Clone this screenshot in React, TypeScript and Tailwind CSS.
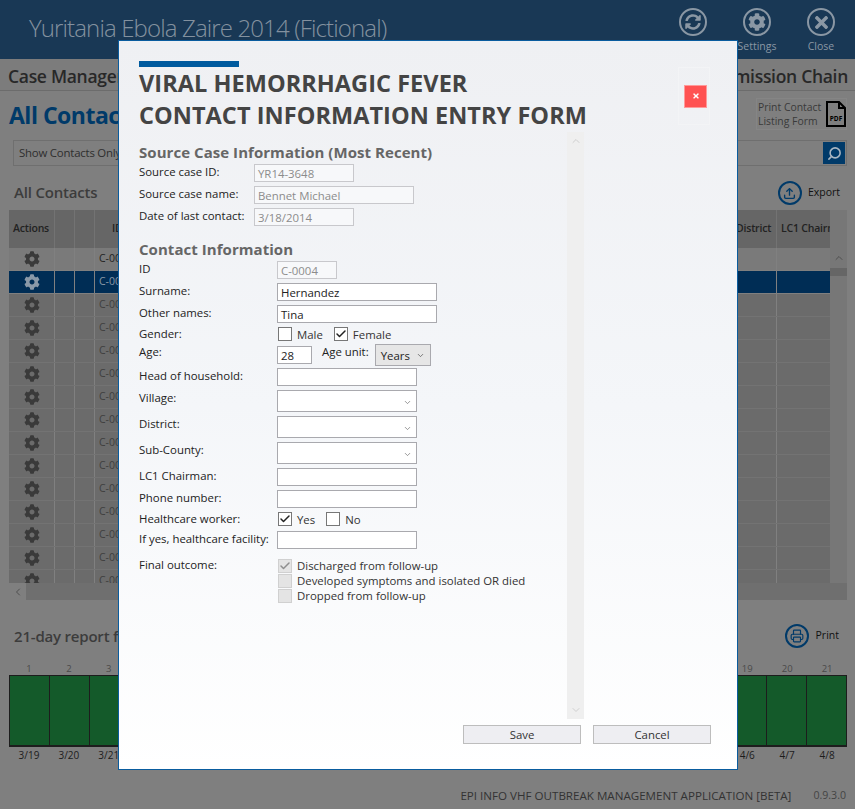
import React from "react";
import { FaCog, FaSyncAlt, FaTimes } from "react-icons/fa";
import { Check, ChevronDown, ChevronUp, ChevronLeft, Printer, Search, Upload } from "lucide-react";

const F = { fontFamily: '"Open Sans","Noto Sans",sans-serif' };

function TopIcon({ children, label }: { children: React.ReactNode; label?: string }) {
  return (
    <div className="flex w-[64px] flex-col items-center">
      <div className="flex h-[28px] w-[28px] items-center justify-center rounded-full border-[2px] border-[#8a97a4] text-[#8a97a4]">
        {children}
      </div>
      <div className="mt-[2px] h-[16px] text-[10.5px] leading-[16px] text-[#8a97a4]">{label}</div>
    </div>
  );
}

function Field({ label, w = 160, value = "", disabled = false, x = 138, select = false, h = 18, mb = 4 }: any) {
  return (
    <div className="flex" style={{ marginBottom: mb }}>
      <div className="text-[11.4px] leading-[16px] text-[#222]" style={{ width: x }}>{label}</div>
      <div
        className={`relative border-[1px] px-[3px] text-[11.4px] ${disabled ? "border-[#c8c8cc] bg-[#f7f8fa] text-[#8c8c8c]" : "border-[#a9a9ae] bg-white text-[#222]"}`}
        style={{ width: w, height: h, lineHeight: `${h - 1}px` }}
      >
        {value}
        {select && <ChevronDown size={9} className="absolute right-[4px] top-[7px] text-[#777]" />}
      </div>
    </div>
  );
}

function Box({ checked = false, dim = false }: { checked?: boolean; dim?: boolean }) {
  return (
    <span className={`flex h-[14px] w-[14px] shrink-0 items-center justify-center border-[1px] ${dim ? "border-[#d0d0d0] bg-[#e4e4e4]" : "border-[#777] bg-white"}`}>
      {checked && <Check size={12} strokeWidth={3} className={dim ? "text-[#8e8e8e]" : "text-[#222]"} />}
    </span>
  );
}

function Opt({ checked = false, label, dim = false, ml = 0 }: any) {
  return (
    <span className="flex items-center gap-[5px] text-[11.4px] leading-[15px] text-[#333]" style={{ marginLeft: ml }}>
      <Box checked={checked} dim={dim} />
      {label}
    </span>
  );
}

const rows = Array.from({ length: 15 }, (_, i) => i);
const dayLabels = ["3/19","3/20","3/21","3/22","3/23","3/24","3/25","3/26","3/27","3/28","3/29","3/30","3/31","4/1","4/2","4/3","4/4","4/5","4/6","4/7","4/8"];

export default function App() {
  return (
    <div className="relative h-[809px] w-[855px] overflow-hidden bg-[#7f7f7f]" style={F}>
      {/* header */}
      <header className="flex h-[59px] items-start justify-between bg-[#193855] pl-[29px] pr-[2px] pt-[8px]">
        <h1 className="text-[24px] font-light leading-[40px] tracking-[-0.87px] text-[#83919f]">Yuritania Ebola Zaire 2014 (Fictional)</h1>
        <div className="flex">
          <TopIcon><FaSyncAlt size={16} /></TopIcon>
          <TopIcon label="Settings"><FaCog size={18} /></TopIcon>
          <TopIcon label="Close"><FaTimes size={19} /></TopIcon>
        </div>
      </header>

      {/* tabs */}
      <nav className="flex h-[32px] items-center justify-between border-b-[1px] border-[#6c6c6c] bg-[#7c7c7c] pl-[8px] pr-[7px] pt-[3px] text-[17.5px] font-semibold tracking-[-0.3px] text-[#282828]">
        <span>Case Management</span>
        <span>Transmission Chain</span>
      </nav>

      {/* title row */}
      <div className="mt-[6px] flex h-[33px] items-center justify-between pl-[9px] pr-[8px]">
        <h2 className="pt-[4px] text-[23px] font-bold tracking-[-0.5px] text-[#003a69]">All Contacts</h2>
        <div className="flex h-[32px] w-[91px] items-center gap-[4px] whitespace-nowrap border-[1px] border-[#858585] pl-[1px] text-left text-[10.4px] leading-[14px] text-[#3a3a3a]">
          <span className="w-[64px]">Print Contact<br />Listing Form</span>
          <svg width="20" height="26" viewBox="0 0 20 26">
            <path d="M1 1h12l6 6v18H1z M13 1v6h6" fill="#7f7f7f" stroke="#000" strokeWidth="2" />
            <text x="10" y="20" textAnchor="middle" fontSize="6.5" fontWeight="700" fill="#000">PDF</text>
          </svg>
        </div>
      </div>

      {/* filter row */}
      <div className="mt-[10px] flex items-center justify-between pl-[13px] pr-[8px]">
        <div className="flex h-[26px] flex-1 items-center justify-between border-[1px] border-[#6f6f6f] pl-[5px] pr-[1px] text-[11.4px] tracking-[-0.2px] text-[#2e2e2e]">
          <span>Show Contacts Only</span>
          <span className="flex h-[22px] w-[22px] items-center justify-center bg-[#003a69] text-[#a9b6c2]">
            <Search size={15} className="-scale-x-100" strokeWidth={2.5} />
          </span>
        </div>
      </div>

      {/* All contacts */}
      <div className="mt-[14px] flex h-[26px] items-center justify-between pl-[14px] pr-[15px]">
        <span className="pb-[2px] text-[15px] font-semibold tracking-[-0.2px] text-[#3c3c3c]">All Contacts</span>
        <span className="flex items-center gap-[6px] text-[10.5px] text-[#111]">
          <span className="flex h-[24px] w-[24px] items-center justify-center rounded-full border-[2px] border-[#003a69] text-[#003a69]"><Upload size={13} strokeWidth={2.5} /></span>
          Export
        </span>
      </div>

      {/* table */}
      <div className="ml-[9px] mt-[4px] flex h-[390px] w-[838px] flex-col">
        <div className="flex h-[373px]">
          <div className="w-[821px] overflow-hidden">
            <div className="flex h-[38px] items-center bg-[#666] text-[10.5px] font-semibold tracking-[-0.2px] text-[#222]">
              <div className="w-[45px] pl-[4px]">Actions</div>
              <div className="h-full w-[20px] border-l-[1px] border-[#737373]" />
              <div className="h-full w-[20px] border-l-[1px] border-[#737373]" />
              <div className="flex h-full w-[640px] items-center border-l-[1px] border-[#737373] pl-[17px]">ID</div>
              <div className="flex h-full w-[42px] items-center border-l-[1px] border-[#737373] pl-[1px]">District</div>
              <div className="flex h-full flex-1 items-center overflow-hidden whitespace-nowrap border-l-[1px] border-[#737373] pl-[4px]">LC1 Chairman</div>
            </div>
            {rows.map((i) => (
              <div key={i} className={`flex h-[23px] items-center border-b-[1px] text-[10.5px] ${i === 0 ? "border-[#7f7f7f] bg-[#7a7a7a] text-[#222]" : i === 1 ? "border-[#7f7f7f] bg-[#002d55] text-[#8a99a8]" : "border-[#737373] bg-[#6b6b6b] text-[#3e3e3e]"}`}>
                <div className={`flex w-[45px] justify-center ${i === 1 ? "text-[#8a99a8]" : "text-[#3a3a3a]"}`}><FaCog size={16} /></div>
                <div className="h-full w-[20px] border-l-[1px] border-[#808080]" />
                <div className="h-full w-[20px] border-l-[1px] border-[#808080]" />
                <div className="flex h-full w-[640px] items-center border-l-[1px] border-[#808080] pl-[4px]">C-00{String(i + 1).padStart(2, "0")}</div>
                <div className="h-full w-[42px] border-l-[1px] border-[#808080]" />
                <div className="h-full flex-1 border-l-[1px] border-[#808080]" />
              </div>
            ))}
          </div>
          <div className="flex w-[17px] flex-col items-center bg-[#777] pt-[42px] text-[#4f4f4f]">
            <ChevronUp size={12} />
            <div className="mt-[4px] h-[8px] w-full bg-[#666]" />
          </div>
        </div>
        <div className="flex h-[17px] items-center bg-[#777] text-[#4f4f4f]">
          <span className="flex h-full w-[17px] items-center justify-center bg-[#7f7f7f]"><ChevronLeft size={12} /></span>
          <span className="h-full flex-1 bg-[#6f6f6f]" />
        </div>
      </div>

      {/* 21 day */}
      <div className="mt-[22px] flex h-[28px] items-center justify-between pl-[14px] pr-[16px]">
        <span className="text-[15px] font-semibold tracking-[-0.2px] text-[#3c3c3c]">21-day report for contact</span>
        <span className="flex items-center gap-[7px] text-[10.5px] text-[#111]">
          <span className="flex h-[24px] w-[24px] items-center justify-center rounded-full border-[2px] border-[#003a69] text-[#003a69]"><Printer size={14} /></span>
          Print
        </span>
      </div>
      <div className="ml-[9px] mt-[12px] w-[838px]">
        <div className="flex h-[13px] text-[9.5px] leading-[13px] text-[#4a4a4a]">
          {dayLabels.map((_, i) => <div key={i} className="flex-1 text-center">{i + 1}</div>)}
        </div>
        <div className="flex h-[72px] border-[1px] border-b-[2px] border-[#1d1d1d] bg-[#145a2a]">
          {dayLabels.map((_, i) => <div key={i} className={`flex-1 ${i < 20 ? "border-r-[1px] border-[#1d1d1d]" : ""}`} />)}
        </div>
        <div className="flex h-[16px] text-[10px] leading-[16px] text-[#1c1c1c]">
          {dayLabels.map((d) => <div key={d} className="flex-1 text-center">{d}</div>)}
        </div>
      </div>

      {/* footer */}
      <footer className="mt-[24px] flex justify-end pr-[9px] text-[11.6px] text-[#333]">
        <span>EPI INFO VHF OUTBREAK MANAGEMENT APPLICATION [BETA]</span>
        <span className="ml-[22px] text-[10.6px] leading-[16px] text-[#444]">0.9.3.0</span>
      </footer>

      {/* modal */}
      <div className="absolute left-[118px] top-[40px] flex h-[730px] w-[620px] flex-col border-[1px] border-[#0a5c9e] bg-gradient-to-b from-[#eff0f3] via-[#f4f6f9] to-white pt-[20px]">
        <div className="relative pl-[20px] pr-[28px]">
          <div className="h-[6px] w-[100px] bg-[#005a9e]" />
          <h2 className="text-[23.5px] font-bold leading-[32px] tracking-[0.05px] text-[#444]">
            VIRAL HEMORRHAGIC FEVER<br />CONTACT INFORMATION ENTRY FORM
          </h2>
          <div className="absolute right-[27px] top-[6px] flex h-[58px] w-[32px] items-center justify-center border-[1px] border-[#f3f4f6] pl-[3px]">
            <span className="flex h-[23px] w-[23px] shrink-0 items-center justify-center border-[1px] border-[#ff9a9a] bg-[#ff5252] text-white"><FaTimes size={8} /></span>
          </div>
        </div>

        <div className="mt-[1px] flex h-[587px]">
          <div className="w-[448px] pl-[20px]">
            <h3 className="mt-[9px] text-[15px] font-bold leading-[23px] tracking-[0.05px] text-[#666]">Source Case Information (Most Recent)</h3>
            <Field label="Source case ID:" x={115} w={100} value="YR14-3648" disabled />
            <Field label="Source case name:" x={115} w={160} value="Bennet Michael" disabled />
            <Field label="Date of last contact:" x={115} w={100} value="3/18/2014" disabled />

            <h3 className="mt-[12px] text-[15px] font-bold leading-[23px] tracking-[0.05px] text-[#666]">Contact Information</h3>
            <div>
              <Field label="ID" w={60} value="C-0004" disabled />
              <Field label="Surname:" value="Hernandez" />
              <Field label="Other names:" value="Tina" mb={3} />
              <div className="flex h-[16px] items-center">
                <div className="w-[138px] text-[11.4px] text-[#222]">Gender:</div>
                <div className="flex pl-[1px]"><Opt label="Male" /><Opt checked label="Female" ml={11} /></div>
              </div>
              <div className="mb-[1px] mt-[2px] flex h-[23px]">
                <div className="w-[138px] text-[11.4px] leading-[16px] text-[#222]">Age:</div>
                <div className="mt-[2px] h-[18px] w-[35px] border-[1px] border-[#a9a9ae] bg-white px-[3px] text-[11.4px] leading-[17px] text-[#222]">28</div>
                <div className="ml-[10px] text-[11.4px] leading-[16px] text-[#222]">Age unit:</div>
                <div className="relative ml-[6px] h-[22px] w-[56px] border-[1px] border-[#a9a9ae] bg-[#e6e6e6] pl-[5px] text-[11.4px] leading-[22px] text-[#222]">
                  Years<ChevronDown size={9} className="absolute right-[5px] top-[6px] text-[#555]" />
                </div>
              </div>
              <Field label="Head of household:" w={140} />
              <Field label="Village:" w={140} h={22} select />
              <Field label="District:" w={140} h={22} select />
              <Field label="Sub-County:" w={140} h={22} select />
              <Field label="LC1 Chairman:" w={140} />
              <Field label="Phone number:" w={140} mb={3} />
              <div className="flex h-[16px] items-center">
                <div className="w-[138px] text-[11.4px] text-[#222]">Healthcare worker:</div>
                <div className="flex pl-[1px]"><Opt checked label="Yes" /><Opt label="No" ml={11} /></div>
              </div>
              <div className="mt-[4px]">
                <Field label="If yes, healthcare facility:" w={140} />
              </div>
              <div className="mt-[9px] flex">
                <div className="w-[138px] text-[11.4px] leading-[14px] text-[#222]">Final outcome:</div>
                <div className="flex flex-col pl-[1px]">
                  <Opt checked dim label="Discharged from follow-up" />
                  <Opt dim label="Developed symptoms and isolated OR died" />
                  <Opt dim label="Dropped from follow-up" />
                </div>
              </div>
            </div>
          </div>
          <div className="flex h-full w-[17px] flex-col items-center justify-between bg-[#efefef] py-[3px] text-[#cfcfcf]">
            <ChevronUp size={12} />
            <ChevronDown size={12} />
          </div>
        </div>

        <div className="mt-[6px] flex justify-end gap-[12px] pr-[26px]">
          <button className="h-[19px] w-[118px] border-[1px] border-[#bdbdbd] bg-[#eeeef2] text-[11.4px] leading-[17px] text-[#333]">Save</button>
          <button className="h-[19px] w-[118px] border-[1px] border-[#bdbdbd] bg-[#eeeef2] text-[11.4px] leading-[17px] text-[#333]">Cancel</button>
        </div>
      </div>
    </div>
  );
}
